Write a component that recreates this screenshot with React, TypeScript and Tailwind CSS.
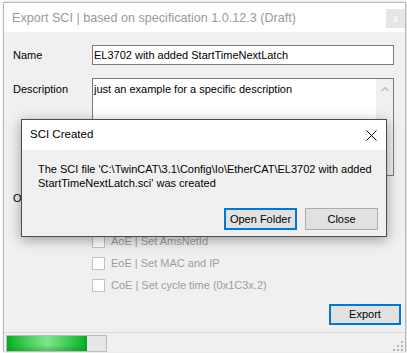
import { FiChevronUp } from "react-icons/fi";

function CheckRow({ label }: { label?: string }) {
  return (
    <div className="h-[22px] flex items-center gap-[6px]">
      <div className="w-[13px] h-[13px] border border-[#c2c2c2] bg-white"></div>
      {label && <span className="text-[#9d9d9d]">{label}</span>}
    </div>
  );
}

function SciCreated() {
  return (
    <div className="absolute left-[21px] top-[119px] w-[366px] h-[118px] border border-[#4d4d4d] bg-[#f0f0f0] flex flex-col shadow-[0_3px_12px_rgba(0,0,0,0.35)]">
      <div className="h-[30px] bg-white flex items-center justify-between pl-[8px] pr-[9px]">
        <span className="text-[11.5px] text-black">SCI Created</span>
        <svg width="11" height="11" viewBox="0 0 11 11" className="text-black">
          <path d="M0.5 0.5 L10.5 10.5 M10.5 0.5 L0.5 10.5" stroke="currentColor" strokeWidth="1" fill="none" />
        </svg>
      </div>
      <div className="flex-1 flex flex-col justify-between pl-[16px] pr-[8px] pt-[12px] pb-[6px]">
        <p className="leading-[14px] text-black whitespace-nowrap">
          The SCI file 'C:\TwinCAT\3.1\Config\Io\EtherCAT\EL3702 with added
          <br />
          StartTimeNextLatch.sci' was created
        </p>
        <div className="flex justify-end gap-[8px]">
          <button className="w-[73px] h-[22px] border-2 border-[#0078d7] bg-[#e1e1e1] text-black leading-none">
            Open Folder
          </button>
          <button className="w-[73px] h-[22px] border border-[#adadad] bg-[#e1e1e1] text-black leading-none">
            Close
          </button>
        </div>
      </div>
    </div>
  );
}

export default function App() {
  return (
    <div className="relative w-[407px] h-[353px] bg-white overflow-hidden pl-[3px] pt-[2px] font-['Liberation_Sans',Arial,sans-serif] text-[11px]">
      <div className="w-[403px] h-[350px] border border-[#b9b9b9] border-b-0 bg-[#f0f0f0] flex flex-col shadow-[1px_0_3px_rgba(0,0,0,0.2)]">
        <div className="h-[29px] bg-white flex justify-between">
          <span className="pl-[8px] pt-[6px] text-[12.6px] text-[#9a9a9a]">
            Export SCI | based on specification 1.0.12.3 (Draft)
          </span>
          <div className="mt-[6px] w-[19px] h-[19px] bg-[#e6e6e6] flex items-center justify-center text-white text-[10px]">
            x
          </div>
        </div>

        <div className="flex-1 flex flex-col pl-[9px] pr-[10px] pt-[13px]">
          <div className="flex items-center">
            <span className="w-[79px] text-black">Name</span>
            <div className="w-[302px] h-[20px] border border-[#7a7a7a] bg-white pl-[1px] flex items-center text-black">
              EL3702 with added StartTimeNextLatch
            </div>
          </div>

          <div className="flex mt-[13px]">
            <span className="w-[79px] pt-[3px] text-black">Description</span>
            <div className="w-[302px] h-[98px] border border-[#7a7a7a] bg-white flex">
              <div className="flex-1 pl-[1px] pt-[3px] text-black leading-[14px]">
                just an example for a specific description
              </div>
              <div className="w-[17px] bg-[#f0f0f0] flex justify-center pt-[4px] text-[#c2c2c2]">
                <FiChevronUp size={12} strokeWidth={3} />
              </div>
            </div>
          </div>

          <div className="flex mt-[10px]">
            <span className="w-[79px] pt-[4px] text-black">Options</span>
            <div className="flex flex-col">
              <CheckRow />
              <CheckRow />
              <CheckRow label="AoE | Set AmsNetId" />
              <CheckRow label="EoE | Set MAC and IP" />
              <CheckRow label="CoE | Set cycle time (0x1C3x.2)" />
            </div>
          </div>

          <div className="flex justify-end mt-[8px] mr-[-6px]">
            <button className="w-[72px] h-[21px] border-2 border-[#0078d7] bg-[#e1e1e1] text-black leading-none">
              Export
            </button>
          </div>
        </div>

        <div className="h-[20px] border-t border-[#d9d9d9] flex items-start justify-between pt-[2px] pl-[2px] pr-[2px]">
          <div className="w-[101px] h-[17px] border border-[#bcbcbc] bg-[#e6e6e6] flex">
            <div className="w-[80px] h-full bg-[linear-gradient(90deg,#06b025_0%,#5fd86f_35%,#7ee68a_50%,#5fd86f_65%,#06b025_100%)] shadow-[inset_0_-3px_4px_rgba(0,120,20,0.35)]"></div>
          </div>
          <svg width="10" height="10" viewBox="0 0 10 10" className="mt-[6px]">
            <rect x="8" y="0" width="2" height="2" fill="#b4b4b4" />
            <rect x="4" y="4" width="2" height="2" fill="#b4b4b4" />
            <rect x="8" y="4" width="2" height="2" fill="#b4b4b4" />
            <rect x="0" y="8" width="2" height="2" fill="#b4b4b4" />
            <rect x="4" y="8" width="2" height="2" fill="#b4b4b4" />
            <rect x="8" y="8" width="2" height="2" fill="#b4b4b4" />
          </svg>
        </div>
      </div>
      <SciCreated />
    </div>
  );
}
